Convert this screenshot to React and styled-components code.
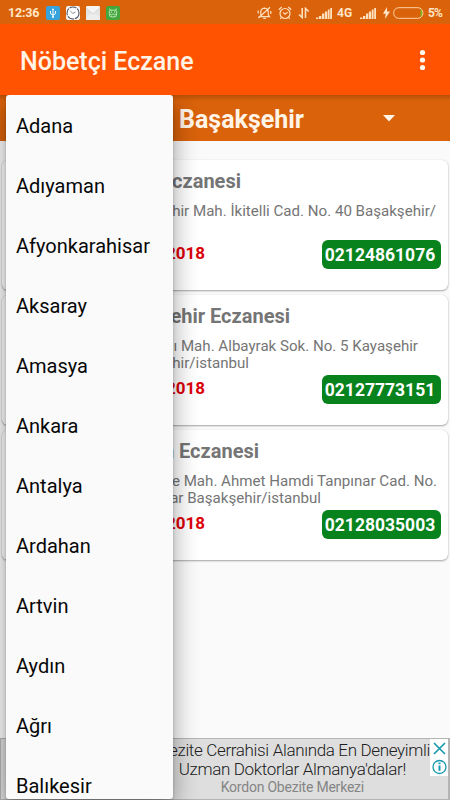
import React from 'react';
import styled, { createGlobalStyle } from 'styled-components';

const GlobalStyle = createGlobalStyle`
  * { box-sizing: border-box; }
  body { margin: 0; background: #fafafa; }
`;

const Screen = styled.div`
  position: relative;
  display: flex;
  flex-direction: column;
  width: 450px;
  height: 800px;
  overflow: hidden;
  background: #fafafa;
  font-family: Roboto, sans-serif;
`;

const StatusBar = styled.header`
  display: flex;
  flex: none;
  align-items: center;
  height: 24px;
  padding: 1px 7px 0 8px;
  background: #d9620b;
  color: #ffe6c8;
`;

const StatusText = styled.span`
  width: ${(p) => p.$width}px;
  margin-right: ${(p) => p.$gap || 0}px;
  font-size: ${(p) => p.$size || 12}px;
  font-weight: ${(p) => p.$weight || 500};
  line-height: 24px;
  letter-spacing: ${(p) => p.$spacing || 0}px;
  white-space: nowrap;
`;

const StatusGlyph = styled.svg`
  display: block;
  flex: none;
  width: ${(p) => p.$width}px;
  height: ${(p) => p.$height || 14}px;
  margin-right: ${(p) => p.$gap || 0}px;
`;

const Spacer = styled.div`
  flex: 1;
`;

const AppBar = styled.div`
  display: flex;
  flex: none;
  align-items: center;
  justify-content: space-between;
  height: 71px;
  padding: 4px 23px 0 20px;
  background: #ff5302;
`;

const AppTitle = styled.h1`
  margin: 0;
  color: #fff4e6;
  font-size: 25px;
  font-weight: 500;
  line-height: 32px;
`;

const MoreIcon = styled.svg`
  width: 9px;
  height: 22px;
  margin-top: -3px;
`;

const FilterBar = styled.div`
  display: flex;
  flex: none;
  align-items: center;
  height: 46px;
  padding: 3px 55px 0 179px;
  justify-content: space-between;
  background: linear-gradient(rgba(90, 30, 0, 0.28), rgba(90, 30, 0, 0) 6px), #d9620b;
  color: #fff4e6;
  font-size: 25px;
  font-weight: 700;
  line-height: 32px;
`;

const Caret = styled.svg`
  width: 12px;
  height: 7px;
  margin-bottom: 2px;
`;

const CardList = styled.main`
  display: flex;
  flex: 1;
  flex-direction: column;
  gap: 5px;
  padding: 19px 2px 0;
`;

const Card = styled.article`
  flex: none;
  height: 130px;
  padding: 8px 7px 0 0;
  border-radius: 6px;
  background: #fff;
  box-shadow: 0 1px 2px rgba(0, 0, 0, 0.34), 0 0 1px rgba(0, 0, 0, 0.15);
`;

const CardTitle = styled.h2`
  display: flex;
  justify-content: flex-end;
  width: ${(p) => p.$end}px;
  margin: 0 0 9px;
  color: #757575;
  font-size: 20px;
  font-weight: 700;
  line-height: 26px;
  white-space: nowrap;
`;

const Address = styled.div`
  height: 37px;
  color: #757575;
  font-size: 15.1px;
  line-height: 17.4px;
`;

const AddressLine = styled.div`
  display: flex;
  justify-content: flex-end;
  width: ${(p) => p.$end}px;
  white-space: pre;
`;

const CardFooter = styled.div`
  display: flex;
  justify-content: space-between;
  height: 28px;
`;

const DutyDate = styled.div`
  width: 203px;
  color: #dc0008;
  font-size: 17px;
  font-weight: 700;
  line-height: 26px;
  text-align: right;
`;

const Phone = styled.div`
  width: 119px;
  height: 29px;
  border-radius: 6px;
  background: #07821c;
  color: #fff;
  font-size: 17.5px;
  font-weight: 700;
  line-height: 31px;
  text-align: center;
  padding-right: 3px;
`;

const AdBanner = styled.aside`
  display: flex;
  flex: none;
  justify-content: space-between;
  height: 62px;
  border: 1px solid #b4b4b4;
  border-right-width: 2px;
  background: #dedede;
`;

const AdCopy = styled.div`
  flex: 1;
  padding-top: 2px;
  color: #202020;
  font-weight: 300;
  white-space: nowrap;
`;

const AdLine = styled.div`
  display: flex;
  justify-content: flex-end;
  width: ${(p) => p.$end}px;
  font-size: 17px;
  line-height: 18.5px;
  letter-spacing: -0.34px;
`;

const AdSponsor = styled(AdLine)`
  color: #858585;
  font-size: 14px;
  line-height: 18px;
  font-weight: 400;
  letter-spacing: -0.22px;
`;

const AdControls = styled.svg`
  flex: none;
  width: 18px;
  height: 37px;
  background: #fff;
`;

const CityMenu = styled.ul`
  position: absolute;
  top: 95px;
  left: 6px;
  width: 166.5px;
  height: 704px;
  margin: 0;
  padding: 1px 0 0;
  overflow: hidden;
  border-radius: 3px;
  background: #fafafa;
  box-shadow: 0 10px 26px rgba(0, 0, 0, 0.38), 0 1px 3px rgba(0, 0, 0, 0.22);
  clip-path: inset(0 -40px -20px -20px);
  list-style: none;
`;

const CityItem = styled.li`
  height: 60px;
  padding-left: 10px;
  color: #080808;
  font-size: 20px;
  line-height: 61px;
`;

const cities = ['Adana', 'Adıyaman', 'Afyonkarahisar', 'Aksaray', 'Amasya', 'Ankara', 'Antalya', 'Ardahan', 'Artvin', 'Aydın', 'Ağrı', 'Balıkesir'];

const pharmacies = [
  { title: 'Eczanesi', titleEnd: 239, lines: [['hir Mah. İkitelli Cad. No. 40 Başakşehir/', 434]], phone: '02124861076' },
  { title: 'ehir Eczanesi', titleEnd: 288, lines: [['ı Mah. Albayrak Sok. No. 5 Kayaşehir', 416], ['hir/istanbul', 247]], phone: '02127773151' },
  { title: 'n Eczanesi', titleEnd: 257, lines: [['e Mah. Ahmet Hamdi Tanpınar Cad. No.', 435], ['ar Başakşehir/istanbul', 319]], phone: '02128035003' },
];

function Signal({ gap }) {
  return (
    <StatusGlyph $width={16} $height={12} $gap={gap} viewBox="0 0 16 12" fill="#ffe0bd">
      <path d="M0 12v-1.6h2.4V12zM3 12V9h2.4v3zM6 12V6.6h2.3V12zM8.9 12V4.4h2.3V12zM11.8 12V2.4h1.8V12zM14.2 12V1H16v11z" />
    </StatusGlyph>
  );
}

export default function App() {
  return (
    <Screen>
      <GlobalStyle />
      <StatusBar>
        <StatusText $width={38} $size={12.5} $weight={700} $spacing={-0.2}>12:36</StatusText>
        <StatusGlyph $width={14} $gap={6} viewBox="0 0 14 14">
          <rect width="14" height="14" rx="2" fill="#36a3dc" />
          <path d="M7 3v8M4.5 5v2.2Q4.5 8.5 7 9q2.5-.5 2.5-1.8V5" fill="none" stroke="#fff" />
          <path d="M5.8 4 7 2.2 8.2 4z" fill="#fff" />
          <circle cx="7" cy="11" r="1" fill="#fff" />
        </StatusGlyph>
        <StatusGlyph $width={14} $gap={6} viewBox="0 0 14 14">
          <rect width="14" height="14" rx="2" fill="#f4f4f4" />
          <circle cx="7" cy="7" r="6" fill="#fff" stroke="#4b5260" strokeWidth="1.1" strokeDasharray="7 1" />
          <path d="m4.3 5 2.5 2.4L9.5 6" fill="none" stroke="#66717f" strokeWidth=".8" />
        </StatusGlyph>
        <StatusGlyph $width={14} $gap={6} viewBox="0 0 14 14">
          <rect width="14" height="14" rx="1.5" fill="#e4e4e4" />
          <path d="M0 1.5Q0 0 1.5 0h11Q14 0 14 1.5L7 8z" fill="#f5f5f5" />
          <path d="m0 12 5-5 2 1.6L9 7l5 5v2H0z" fill="#ededed" />
          <path d="m0 2 7 6 7-6" fill="none" stroke="#cfcfcf" strokeWidth=".7" />
        </StatusGlyph>
        <StatusGlyph $width={14} viewBox="0 0 14 14">
          <rect width="14" height="14" rx="2" fill="#42a83d" />
          <path d="M4.2 4 3.5 2.5M9.8 4l.7-1.5M4 4.2h6l.8 3-.8 3.2q-3 1.2-6 0l-.8-3.2zM4 7.8l1.5 1L7 7.8l1.5 1 1.5-1" fill="none" stroke="#d9f3d2" strokeWidth=".8" />
          <circle cx="5.5" cy="6" r=".5" fill="#fff" />
          <circle cx="8.5" cy="6" r=".5" fill="#fff" />
        </StatusGlyph>
        <Spacer />
        <StatusGlyph $width={15} $gap={6} viewBox="0 0 15 14" fill="none" stroke="#ffe0bd" strokeWidth="1.2">
          <path d="M3.8 9.8V5.6Q4 2.8 7.5 2.2q3.5.6 3.7 3.4v3.1l1.3 1.9H2.6zM6.2 12.4h2.6M1.5 12 13 1.3M1.2 4.5v3M13.8 5v3" />
        </StatusGlyph>
        <StatusGlyph $width={14} $gap={6} viewBox="0 0 14 14" fill="none" stroke="#ffe0bd" strokeWidth="1.2">
          <circle cx="7" cy="7.5" r="5" />
          <path d="M.8 3.7 3.7 1M10.3 1l2.9 2.7M5 6.3l2 2 2.5-2M3.3 11.5l-1 1.4M10.7 11.5l1 1.4" />
        </StatusGlyph>
        <StatusGlyph $width={12} $height={12} $gap={6} viewBox="0 0 12 12" fill="none" stroke="#ffe0bd" strokeWidth="1.6">
          <path d="M4.2 1v9.5L1 7.5M7.5 11V1.5l3.2 3" />
        </StatusGlyph>
        <Signal gap={5} />
        <StatusText $width={16} $gap={7} $size={12} $weight={700}>4G</StatusText>
        <Signal gap={7} />
        <StatusGlyph $width={7} $height={12} $gap={3} viewBox="0 0 7 12" fill="#ffe6c8">
          <path d="M4 0 0 6.7h2.7L2 12l5-7.4H4z" />
        </StatusGlyph>
        <StatusGlyph $width={31} $height={12} $gap={4} viewBox="0 0 31 12">
          <path d="M27.5 1.5q2 1.6 2 4.5t-2 4.5z" fill="#7bb51c" />
          <rect x=".7" y=".7" width="29.2" height="10.6" rx="5" fill="none" stroke="#ffd3a4" />
        </StatusGlyph>
        <StatusText $width={15} $size={12} $weight={700} $spacing={-0.8}>5%</StatusText>
      </StatusBar>
      <AppBar>
        <AppTitle>Nöbetçi Eczane</AppTitle>
        <MoreIcon viewBox="0 0 9 22" fill="#fff8ef">
          <circle cx="4.5" cy="3.5" r="2.6" />
          <circle cx="4.5" cy="11" r="2.6" />
          <circle cx="4.5" cy="18.5" r="2.6" />
        </MoreIcon>
      </AppBar>
      <FilterBar>
        Başakşehir
        <Caret viewBox="0 0 12 7"><path d="M0 0h12L6 6.5z" fill="#fff4e6" /></Caret>
      </FilterBar>
      <CardList>
        {pharmacies.map((p) => (
          <Card key={p.phone}>
            <CardTitle $end={p.titleEnd}>{p.title}</CardTitle>
            <Address>
              {p.lines.map(([text, end]) => <AddressLine key={text} $end={end}>{text}</AddressLine>)}
            </Address>
            <CardFooter>
              <DutyDate>2018</DutyDate>
              <Phone>{p.phone}</Phone>
            </CardFooter>
          </Card>
        ))}
      </CardList>
      <AdBanner>
        <AdCopy>
          <AdLine $end={429}>bezite Cerrahisi Alanında En Deneyimli</AdLine>
          <AdLine $end={405}>Uzman Doktorlar Almanya'dalar!</AdLine>
          <AdSponsor $end={363}>Kordon Obezite Merkezi</AdSponsor>
        </AdCopy>
        <AdControls viewBox="0 0 18 37" fill="none" stroke="#1597ae" strokeWidth="1.6">
          <path d="m4 4 11 11M15 4 4 15" />
          <circle cx="9.5" cy="28" r="6.5" strokeWidth="1.3" />
          <path d="M9.5 26.5v5.3M9.5 23.5v1.8" strokeWidth="2" />
        </AdControls>
      </AdBanner>
      <CityMenu>
        {cities.map((city) => <CityItem key={city}>{city}</CityItem>)}
      </CityMenu>
    </Screen>
  );
}
